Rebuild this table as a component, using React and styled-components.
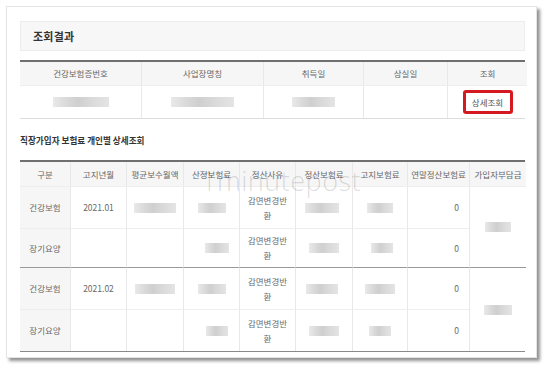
import React from "react";
import styled, { createGlobalStyle } from "styled-components";

const Global = createGlobalStyle`
  html, body { margin: 0; padding: 0; background: #ffffff; }
  body {
    font-family: "Noto Sans CJK KR", "Noto Sans", sans-serif;
    color: #555;
    -webkit-font-smoothing: antialiased;
  }
`;

const Page = styled.div`
  width: 550px;
  height: 371px;
  padding: 6px 0 0 6px;
  box-sizing: border-box;
`;

const Card = styled.section`
  width: 531px;
  height: 352px;
  box-sizing: border-box;
  background: #fff;
  padding: 14px 11px 0 13px;
  border: 1px solid #e4e4e4;
  box-shadow: 3px 3px 3px 0 rgba(60, 60, 60, 0.55);
  display: flex;
  flex-direction: column;
`;

const TitleBox = styled.div`
  height: 30px;
  box-sizing: border-box;
  background: #f7f7f7;
  border: 1px solid #ececec;
  display: flex;
  align-items: center;
  padding-left: 12px;
  font-size: 11px;
  font-weight: 700;
  color: #333;
  letter-spacing: 0.2px;
`;

const SubTitle = styled.h3`
  margin: 0;
  height: 41px;
  display: flex;
  align-items: center;
  font-size: 8.6px;
  font-weight: 700;
  color: #333;
`;

const Grid = styled.div`
  display: grid;
  grid-template-columns: ${(p) => p.$cols};
  grid-template-rows: ${(p) => p.$rows};
  border-top: 2px solid #6f6f6f;
  border-bottom: 1px solid ${(p) => p.$bottom};
  position: relative;
`;

const Cell = styled.div`
  display: flex;
  align-items: center;
  justify-content: ${(p) => (p.$align === "right" ? "flex-end" : "center")};
  padding: ${(p) =>
    p.$head ? "0 1px" : p.$align === "right" ? "0 10px 0 4px" : "0 4px"};
  text-align: center;
  white-space: ${(p) => (p.$head ? "nowrap" : "normal")};
  font-size: 8.5px;
  line-height: 15px;
  color: ${(p) => (p.$head ? "#666" : "#6a6a6a")};
  background: ${(p) => (p.$head || p.$shade ? "#f6f6f6" : "#fff")};
  border-right: ${(p) => (p.$last ? "none" : "1px solid #e8e8e8")};
  border-bottom: ${(p) =>
    p.$edge ? "1px solid #9a9a9a" : p.$end ? "none" : "1px solid #eeeeee"};
  grid-row: ${(p) => (p.$span ? `span ${p.$span}` : "auto")};
  box-sizing: border-box;
`;

const Blur = styled.span`
  display: inline-block;
  width: ${(p) => p.$w}px;
  height: 10px;
  margin-left: ${(p) => p.$dx || 0}px;
  background: linear-gradient(
    90deg,
    #e9e9e9 0%,
    #d9d9d9 25%,
    #cfcfcf 45%,
    #dadada 70%,
    #e4e4e4 100%
  );
  filter: blur(0.7px);
`;

const DetailButton = styled.span`
  display: inline-flex;
  align-items: center;
  justify-content: center;
  width: 50px;
  height: 24px;
  box-sizing: border-box;
  border: 3px solid #d51920;
  border-radius: 3px;
  background: #fff;
  font-size: 8.5px;
  color: #555;
`;

const Watermark = styled.span`
  position: absolute;
  left: 181px;
  top: 5px;
  font-family: "Open Sans", "Liberation Sans", sans-serif;
  font-weight: 300;
  font-size: 27px;
  line-height: 27px;
  letter-spacing: 0.5px;
  color: rgba(0, 0, 0, 0.14);
  pointer-events: none;
  white-space: nowrap;
`;

const Gap = styled.div`
  height: 9px;
`;

const summaryHead = ["건강보험증번호", "사업장명칭", "취득일", "상실일", "조회"];

const detailHead = [
  "구분",
  "고지년월",
  "평균보수월액",
  "산정보험료",
  "정산사유",
  "정산보험료",
  "고지보험료",
  "연말정산보험료",
  "가입자부담금",
];

const reason = (
  <>
    감면변경반
    <br />환
  </>
);

const months = [
  {
    month: "2021.01",
    rows: [
      { kind: "건강보험", avg: 42, calc: [28, 0], settle: [34, -4], notice: [26, 0] },
      { kind: "장기요양", avg: 0, calc: [24, 10], settle: [30, 0], notice: [22, 4] },
    ],
    share: 26,
  },
  {
    month: "2021.02",
    rows: [
      { kind: "건강보험", avg: 40, calc: [28, 0], settle: [32, -4], notice: [30, 0] },
      { kind: "장기요양", avg: 0, calc: [22, 10], settle: [30, 0], notice: [22, 0] },
    ],
    share: 28,
  },
];

export default function App() {
  return (
    <>
      <Global />
      <Page>
        <Card>
          <TitleBox>조회결과</TitleBox>
          <Gap />
          <Grid $cols="122px 122px 100px 84px 79px" $rows="24px 32px" $bottom="#dcdcdc">
            {summaryHead.map((h, i) => (
              <Cell key={h} $head $last={i === 4}>
                {h}
              </Cell>
            ))}
            <Cell $end><Blur $w={56} /></Cell>
            <Cell $end><Blur $w={63} /></Cell>
            <Cell $end><Blur $w={43} /></Cell>
            <Cell $end />
            <Cell $end $last>
              <DetailButton>상세조회</DetailButton>
            </Cell>
          </Grid>

          <SubTitle>직장가입자 보험료 개인별 상세조회</SubTitle>

          <Grid
            $cols="51px 56px 57px 56px 56px 57px 55px 62px 56px"
            $rows="25px 42px 39px 42px 41px"
            $bottom="#8a8a8a"
          >
            {detailHead.map((h, i) => (
              <Cell key={h} $head $last={i === 8}>
                {h}
              </Cell>
            ))}
            {months.map((m, mi) =>
              m.rows.map((r, ri) => {
                const lastRow = ri === 1;
                const edge = lastRow && mi === 0;
                const end = lastRow && mi === 1;
                return (
                  <React.Fragment key={`${m.month}-${ri}`}>
                    <Cell $shade $edge={edge} $end={end}>{r.kind}</Cell>
                    <Cell $edge={edge} $end={end}>{ri === 0 ? m.month : ""}</Cell>
                    <Cell $edge={edge} $end={end}>{r.avg ? <Blur $w={r.avg} /> : null}</Cell>
                    <Cell $edge={edge} $end={end}>
                      <Blur $w={r.calc[0]} $dx={r.calc[1]} />
                    </Cell>
                    <Cell $edge={edge} $end={end}>{reason}</Cell>
                    <Cell $edge={edge} $end={end}>
                      <Blur $w={r.settle[0]} $dx={r.settle[1]} />
                    </Cell>
                    <Cell $edge={edge} $end={end}>
                      <Blur $w={r.notice[0]} $dx={r.notice[1]} />
                    </Cell>
                    <Cell $align="right" $edge={edge} $end={end}>0</Cell>
                    {ri === 0 && (
                      <Cell $span={2} $last $edge={mi === 0} $end={mi === 1}>
                        <Blur $w={m.share} />
                      </Cell>
                    )}
                  </React.Fragment>
                );
              })
            )}
            <Watermark>1minutepost</Watermark>
          </Grid>
        </Card>
      </Page>
    </>
  );
}
